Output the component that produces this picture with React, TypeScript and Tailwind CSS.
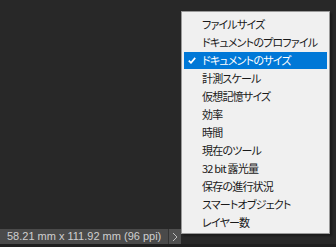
import React from "react";

const items = [
  "ファイルサイズ",
  "ドキュメントのプロファイル",
  "ドキュメントのサイズ",
  "計測スケール",
  "仮想記憶サイズ",
  "効率",
  "時間",
  "現在のツール",
  "32 bit 露光量",
  "保存の進行状況",
  "スマートオブジェクト",
  "レイヤー数",
];

export default function App() {
  return (
    <div className="relative flex h-[247px] w-[336px] flex-col overflow-hidden bg-[#282828]">
      <div className="flex-1" />
      <div className="flex h-[15px] w-[181px] items-center bg-[#4a4a4a]">
        <div
          className="flex-1 whitespace-nowrap pl-[7px] text-[11px] leading-[15px] text-[#cfcfcf]"
          style={{ fontFamily: '"Liberation Sans", Arial, sans-serif' }}
        >
          58.21 mm x 111.92 mm (96 ppi)
        </div>
        <div className="h-full w-px bg-[#333333]" />
        <div className="flex h-full w-[12px] items-center justify-center bg-[#505050]">
          <svg width="6" height="10" viewBox="0 0 6 10">
            <path d="M1 1 L5 5 L1 9" fill="none" stroke="#bdbdbd" strokeWidth="1" />
          </svg>
        </div>
      </div>
      <div className="h-[3px] bg-[#1f1f1f]" />

      <div
        className="absolute left-[181px] top-[11px] w-[149px] border border-[#9a9a9a] bg-[#f0f0f0] px-[2px] pt-[3px] pb-[1px] shadow-[2px_2px_2px_rgba(0,0,0,0.35)]"
        style={{ fontFamily: '"Noto Sans CJK JP", "Noto Sans", sans-serif', fontFeatureSettings: '"palt" 1' }}
      >
        {items.map((label, i) => {
          const active = i === 2;
          return (
            <div
              key={label}
              className={`my-[1px] flex h-[17px] items-center text-[11px] leading-[17px] tracking-[-0.8px] ${
                active ? "bg-[#0078d7] text-white" : "text-[#1a1a1a]"
              }`}
            >
              <div className="flex w-[18px] shrink-0 items-center pl-[4px]">
                {active && (
                  <svg width="8" height="7" viewBox="0 0 8 7">
                    <path d="M0.8 3.6 L3 5.8 L7.2 0.9" fill="none" stroke="#ffffff" strokeWidth="1.7" />
                  </svg>
                )}
              </div>
              <span className="whitespace-nowrap">{label}</span>
            </div>
          );
        })}
      </div>
    </div>
  );
}
